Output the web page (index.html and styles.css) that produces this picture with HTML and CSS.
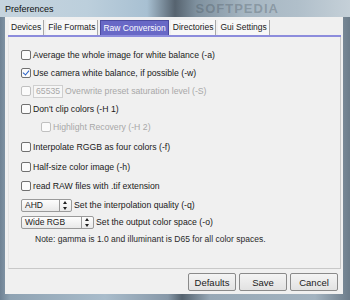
FILE: index.html
```html
<!DOCTYPE html>
<html lang="en">

<head>
  <meta charset="UTF-8">
  <title>Preferences</title>
  <link rel="stylesheet" href="styles.css">
</head>

<body>
  <div class="window">
    <div class="titlebar">
      <span class="title">Preferences</span>
      <span class="mark">SOFTPEDIA</span>
    </div>
    <div class="client">
      <div class="tabs">
        <span class="tab">Devices</span>
        <span class="tab">File Formats</span>
        <span class="tab active">Raw Conversion</span>
        <span class="tab">Directories</span>
        <span class="tab">Gui Settings</span>
      </div>
      <div class="panel">
        <label class="row"><span class="box"></span>Average the whole image for white balance (-a)</label>
        <label class="row"><span class="box checked"></span>Use camera white balance, if possible (-w)</label>
        <label class="row off"><span class="box"></span><span class="num">65535</span>Overwrite preset saturation level (-S)</label>
        <label class="row"><span class="box"></span>Don't clip colors (-H 1)</label>
        <label class="row off sub"><span class="box"></span>Highlight Recovery (-H 2)</label>
        <label class="row more"><span class="box"></span>Interpolate RGGB as four colors (-f)</label>
        <label class="row more"><span class="box"></span>Half-size color image (-h)</label>
        <label class="row less"><span class="box"></span>read RAW files with .tif extension</label>
        <div class="row less">
          <span class="select narrow">AHD<span class="spin"></span></span>Set the interpolation quality (-q)
        </div>
        <div class="row tight">
          <span class="select wide">Wide RGB<span class="spin"></span></span>Set the output color space (-o)
        </div>
        <p class="note">Note: gamma is 1.0 and illuminant is D65 for all color spaces.</p>
      </div>
      <div class="buttons">
        <button>Defaults</button>
        <button>Save</button>
        <button>Cancel</button>
      </div>
    </div>
  </div>
</body>

</html>
```

FILE: styles.css
```css
body {
  margin: 0;
  font-family: "Liberation Sans", Arial, sans-serif;
  font-size: 8.7px;
  color: #1a1a1a;
}

.window {
  width: 350px;
  height: 300px;
  display: flex;
  flex-direction: column;
  background: linear-gradient(90deg, #6f8294 0%, #8fa3b3 3%, #a9bccb 30%, #8798a8 48%, #55636f 52%, #97a8b6 60%, #a3b3c0 90%, #6c7c8a 100%);
}

.titlebar {
  height: 17px;
  display: flex;
  align-items: center;
  padding-left: 5px;
  background: linear-gradient(90deg, #c6d4de 0%, #bccfdc 25%, #a8c0d2 42%, #56636f 50%, #7e909e 56%, #a6b6c2 70%, #b0bfca 85%, #c5d0d8 100%);
}

.title {
  font-size: 9px;
  color: #101010;
}

.mark {
  margin-left: 142px;
  font-size: 13px;
  font-weight: bold;
  letter-spacing: 1px;
  color: rgba(60, 72, 82, 0.3);
}

.client {
  flex: 1;
  margin: 0 7px 6px 5px;
  background: #f0f0f0;
  display: flex;
  flex-direction: column;
  padding: 3px 2px 3px 3px;
}

.tabs {
  display: flex;
  padding-left: 1px;
  border-bottom: 2px solid #8c8cdc;
}

.tab {
  height: 15px;
  line-height: 15px;
  padding: 0 2px;
  margin-right: 2px;
  font-size: 8.5px;
  border-right: 1px solid #a8a8a8;
  background: #f7f7f7;
}

.tab.active {
  background: #6868c6;
  color: #fff;
  border: 1px solid #4a4aa0;
  border-bottom: 0;
  height: 14px;
  line-height: 14px;
}

.panel {
  flex: 1;
  border: 1px solid #c8c8c8;
  border-top: 0;
  border-left-color: #e4e4e4;
  padding: 9px 0 0 12px;
}

.row {
  display: flex;
  align-items: center;
  height: 18px;
}

.row.more {
  margin-top: 2px;
}

.row.less {
  margin-top: 1px;
}

.row.tight {
  margin-top: -1px;
}

.box {
  width: 8px;
  height: 8px;
  margin-right: 2px;
  border: 1px solid #707070;
  border-radius: 2px;
  background: #fbfbfb;
  position: relative;
}

.box.checked::after {
  content: "";
  position: absolute;
  left: 2px;
  top: 0;
  width: 3px;
  height: 5px;
  border: solid #2a62c8;
  border-width: 0 1.5px 1.5px 0;
  transform: rotate(40deg);
}

.row.off {
  color: #a8a8a8;
}

.row.off .box {
  border-color: #c0c0c0;
}

.row.sub {
  padding-left: 20px;
}

.num {
  width: 26px;
  height: 11px;
  line-height: 11px;
  padding-left: 2px;
  margin-right: 2px;
  border: 1px solid #cfcfcf;
  background: #f6f6f6;
}

.select {
  display: flex;
  align-items: center;
  height: 11px;
  padding-left: 3px;
  margin-right: 2px;
  border: 1px solid #9a9a9a;
  border-radius: 2px;
  background: linear-gradient(#fdfdfd, #e9e9e9);
  font-size: 8.5px;
}

.select.narrow {
  width: 46px;
}

.select.wide {
  width: 68px;
}

.spin {
  margin-left: auto;
  width: 11px;
  height: 11px;
  border-left: 1px solid #9a9a9a;
  position: relative;
}

.spin::before,
.spin::after {
  content: "";
  position: absolute;
  left: 3px;
  border: 2.5px solid transparent;
}

.spin::before {
  top: -1px;
  border-bottom: 3px solid #222;
}

.spin::after {
  bottom: -1px;
  border-top: 3px solid #222;
}

.note {
  margin: 3px 0 0 14px;
  font-size: 8.5px;
  color: #2a2a2a;
}

.buttons {
  display: flex;
  justify-content: flex-end;
  gap: 3px;
  padding: 4px 3px 0 0;
}

button {
  width: 48px;
  height: 18px;
  padding: 0;
  font-family: "Liberation Sans", Arial, sans-serif;
  font-size: 9.5px;
  color: #1a1a1a;
  border: 1px solid #8a8a8a;
  border-radius: 2px;
  background: linear-gradient(#f4f4f4, #e2e2e2);
}
```
